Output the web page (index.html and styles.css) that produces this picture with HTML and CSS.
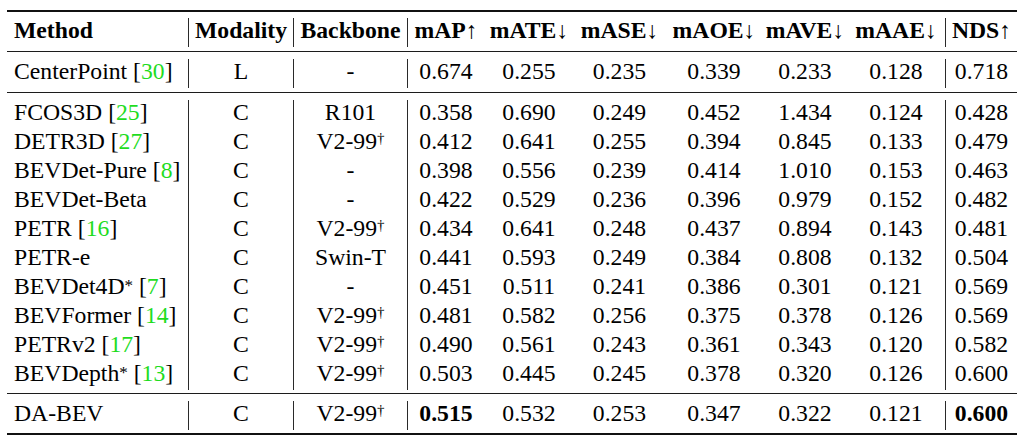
FILE: index.html
```html
<!DOCTYPE html>
<html>
<head>
<meta charset="utf-8">
<link rel="stylesheet" href="styles.css">
</head>
<body>
<div class="wrap">
<table class="results">
  <colgroup>
    <col class="c-method"><col class="c-mod"><col class="c-bb">
    <col class="c-map"><col class="c-mate"><col class="c-mase"><col class="c-maoe"><col class="c-mave"><col class="c-maae">
    <col class="c-nds">
  </colgroup>
  <tbody>
    <tr class="rule top"><td colspan="10"><div class="line heavy"></div></td></tr>
    <tr class="row">
      <th class="m">Method</th>
      <th class="vl">Modality</th>
      <th class="vl">Backbone</th>
      <th class="vl">mAP<span class="arr">↑</span></th>
      <th>mATE<span class="arr">↓</span></th>
      <th>mASE<span class="arr">↓</span></th>
      <th>mAOE<span class="arr">↓</span></th>
      <th>mAVE<span class="arr">↓</span></th>
      <th>mAAE<span class="arr">↓</span></th>
      <th class="vl">NDS<span class="arr">↑</span></th>
    </tr>
    <tr class="rule mid"><td colspan="10"><div class="line"></div></td></tr>
    <tr class="row">
      <td class="m">CenterPoint [<span class="cite">30</span>]</td>
      <td class="vl">L</td><td class="vl">-</td>
      <td class="vl">0.674</td><td>0.255</td><td>0.235</td><td>0.339</td><td>0.233</td><td>0.128</td>
      <td class="vl">0.718</td>
    </tr>
    <tr class="rule mid"><td colspan="10"><div class="line"></div></td></tr>
    <tr class="row">
      <td class="m">FCOS3D [<span class="cite">25</span>]</td>
      <td class="vl">C</td><td class="vl">R101</td>
      <td class="vl">0.358</td><td>0.690</td><td>0.249</td><td>0.452</td><td>1.434</td><td>0.124</td>
      <td class="vl">0.428</td>
    </tr>
    <tr class="row">
      <td class="m">DETR3D [<span class="cite">27</span>]</td>
      <td class="vl">C</td><td class="vl">V2-99<sup>†</sup></td>
      <td class="vl">0.412</td><td>0.641</td><td>0.255</td><td>0.394</td><td>0.845</td><td>0.133</td>
      <td class="vl">0.479</td>
    </tr>
    <tr class="row">
      <td class="m">BEVDet-Pure [<span class="cite">8</span>]</td>
      <td class="vl">C</td><td class="vl">-</td>
      <td class="vl">0.398</td><td>0.556</td><td>0.239</td><td>0.414</td><td>1.010</td><td>0.153</td>
      <td class="vl">0.463</td>
    </tr>
    <tr class="row">
      <td class="m">BEVDet-Beta</td>
      <td class="vl">C</td><td class="vl">-</td>
      <td class="vl">0.422</td><td>0.529</td><td>0.236</td><td>0.396</td><td>0.979</td><td>0.152</td>
      <td class="vl">0.482</td>
    </tr>
    <tr class="row">
      <td class="m">PETR [<span class="cite">16</span>]</td>
      <td class="vl">C</td><td class="vl">V2-99<sup>†</sup></td>
      <td class="vl">0.434</td><td>0.641</td><td>0.248</td><td>0.437</td><td>0.894</td><td>0.143</td>
      <td class="vl">0.481</td>
    </tr>
    <tr class="row">
      <td class="m">PETR-e</td>
      <td class="vl">C</td><td class="vl">Swin-T</td>
      <td class="vl">0.441</td><td>0.593</td><td>0.249</td><td>0.384</td><td>0.808</td><td>0.132</td>
      <td class="vl">0.504</td>
    </tr>
    <tr class="row">
      <td class="m">BEVDet4D<sup class="ast">*</sup> [<span class="cite">7</span>]</td>
      <td class="vl">C</td><td class="vl">-</td>
      <td class="vl">0.451</td><td>0.511</td><td>0.241</td><td>0.386</td><td>0.301</td><td>0.121</td>
      <td class="vl">0.569</td>
    </tr>
    <tr class="row">
      <td class="m">BEVFormer [<span class="cite">14</span>]</td>
      <td class="vl">C</td><td class="vl">V2-99<sup>†</sup></td>
      <td class="vl">0.481</td><td>0.582</td><td>0.256</td><td>0.375</td><td>0.378</td><td>0.126</td>
      <td class="vl">0.569</td>
    </tr>
    <tr class="row">
      <td class="m">PETRv2 [<span class="cite">17</span>]</td>
      <td class="vl">C</td><td class="vl">V2-99<sup>†</sup></td>
      <td class="vl">0.490</td><td>0.561</td><td>0.243</td><td>0.361</td><td>0.343</td><td>0.120</td>
      <td class="vl">0.582</td>
    </tr>
    <tr class="row">
      <td class="m">BEVDepth<sup class="ast">*</sup> [<span class="cite">13</span>]</td>
      <td class="vl">C</td><td class="vl">V2-99<sup>†</sup></td>
      <td class="vl">0.503</td><td>0.445</td><td>0.245</td><td>0.378</td><td>0.320</td><td>0.126</td>
      <td class="vl">0.600</td>
    </tr>
    <tr class="rule mid last"><td colspan="10"><div class="line"></div></td></tr>
    <tr class="row">
      <td class="m">DA-BEV</td>
      <td class="vl">C</td><td class="vl">V2-99<sup>†</sup></td>
      <td class="vl"><b>0.515</b></td><td>0.532</td><td>0.253</td><td>0.347</td><td>0.322</td><td>0.121</td>
      <td class="vl"><b>0.600</b></td>
    </tr>
    <tr class="rule bottom"><td colspan="10"><div class="line heavy"></div></td></tr>
  </tbody>
</table>
</div>
</body>
</html>
```

FILE: styles.css
```css
html, body {
  margin: 0;
  padding: 0;
  background: #ffffff;
}

body {
  font-family: "Liberation Serif", "Times New Roman", serif;
  color: #000000;
}

.wrap {
  padding: 10px 0 0 7px;
}

.results {
  border-collapse: separate;
  border-spacing: 0;
  table-layout: fixed;
  width: 1010px;
  font-size: 23.7px;
}

.c-method { width: 181px; }
.c-mod { width: 105px; }
.c-bb { width: 114px; }
.c-map { width: 77px; }
.c-mate { width: 90px; }
.c-mase { width: 91px; }
.c-maoe { width: 98px; }
.c-mave { width: 84px; }
.c-maae { width: 98px; }
.c-nds { width: 72px; }

.row td,
.row th {
  padding: 0 0 5px 0;
  line-height: 24px;
  text-align: center;
  white-space: nowrap;
  font-weight: normal;
  vertical-align: top;
}

.row th {
  font-weight: bold;
}

.row .m {
  text-align: left;
  padding-left: 7px;
}

.row .vl {
  border-left: 1px solid #2a2a2a;
}

.arr {
  font-weight: normal;
}

.cite {
  color: #1fdc1f;
}

sup {
  font-size: 15px;
  line-height: 0;
  vertical-align: 6px;
}

sup.ast {
  font-size: 17px;
  vertical-align: 3px;
}

.rule td {
  padding: 0;
}

.rule.top td {
  padding: 0 0 6px 0;
}

.rule.mid td {
  padding: 4px 0 7px 0;
}

.rule.mid.last td {
  padding: 3px 0 7px 0;
}

.rule.bottom td {
  padding: 3px 0 0 0;
}

.line {
  height: 1px;
  background: #1c1c1c;
}

.line.heavy {
  height: 2px;
  background: #111111;
}
```
